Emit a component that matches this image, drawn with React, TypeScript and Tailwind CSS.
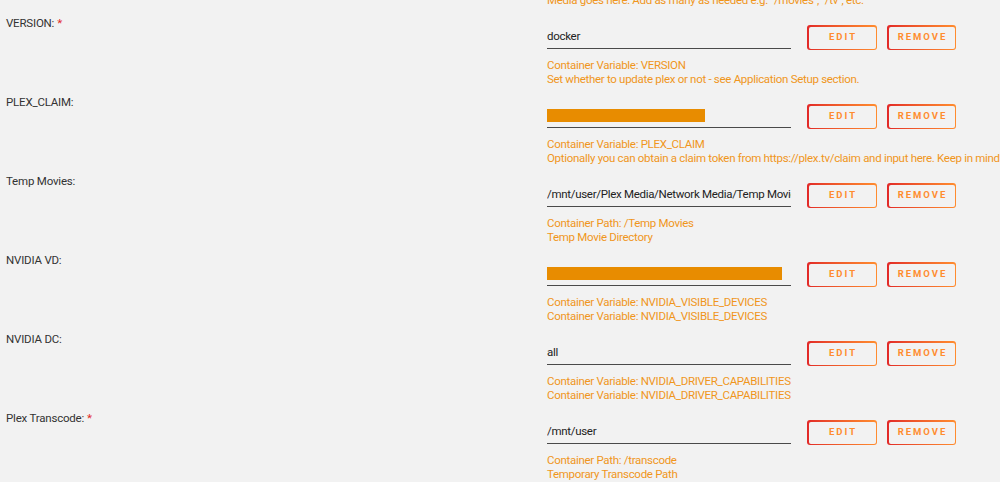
import React from 'react'

type Row = {
  label: string
  required?: boolean
  value?: string
  redact?: number
  lines: string[]
}

const rows: Row[] = [
  {
    label: 'VERSION:',
    required: true,
    value: 'docker',
    lines: [
      'Container Variable: VERSION',
      'Set whether to update plex or not - see Application Setup section.',
    ],
  },
  {
    label: 'PLEX_CLAIM:',
    redact: 158,
    lines: [
      'Container Variable: PLEX_CLAIM',
      'Optionally you can obtain a claim token from https://plex.tv/claim and input here. Keep in mind that the claim tokens expire within 4 minutes.',
    ],
  },
  {
    label: 'Temp Movies:',
    value: '/mnt/user/Plex Media/Network Media/Temp Movies/',
    lines: ['Container Path: /Temp Movies', 'Temp Movie Directory'],
  },
  {
    label: 'NVIDIA VD:',
    redact: 235,
    lines: [
      'Container Variable: NVIDIA_VISIBLE_DEVICES',
      'Container Variable: NVIDIA_VISIBLE_DEVICES',
    ],
  },
  {
    label: 'NVIDIA DC:',
    value: 'all',
    lines: [
      'Container Variable: NVIDIA_DRIVER_CAPABILITIES',
      'Container Variable: NVIDIA_DRIVER_CAPABILITIES',
    ],
  },
  {
    label: 'Plex Transcode:',
    required: true,
    value: '/mnt/user',
    lines: ['Container Path: /transcode', 'Temporary Transcode Path'],
  },
]

function GradButton({ text, width }: { text: string; width: string }) {
  return (
    <div
      className={`${width} h-[25px] rounded-[3px] p-[1.5px] bg-gradient-to-r from-[#e22828] to-[#ff8c2f]`}
    >
      <div className="w-full h-full rounded-[2px] bg-[#f2f2f2] flex items-center justify-center text-[9.5px] font-bold tracking-[2px] text-[#ff8c2f] pl-[2px]">
        {text}
      </div>
    </div>
  )
}

function SettingRow({ row }: { row: Row }) {
  return (
    <div className="flex h-[79px]">
      <div className="w-[547px] shrink-0 pl-[6px] pt-[5px] text-[11.5px] leading-[16px] tracking-[-0.2px] text-[#333]">
        {row.label}
        {row.required && <span className="text-[#e22828] ml-[3px]">*</span>}
      </div>
      <div className="flex-1 min-w-0">
        <div className="flex items-start pt-[15px]">
          <div className="w-[244px] h-[24px] border-b-[1.5px] border-[#4a4a4a] flex items-center overflow-hidden">
            {row.redact ? (
              <div className="h-[13px] bg-[#e88c00]" style={{ width: row.redact }} />
            ) : (
              <span className="whitespace-nowrap text-[11.5px] tracking-[-0.3px] text-[#222]">{row.value}</span>
            )}
          </div>
          <div className="ml-[16px] flex gap-[10px]">
            <GradButton text="EDIT" width="w-[70px]" />
            <GradButton text="REMOVE" width="w-[69px]" />
          </div>
        </div>
        <div className="pt-[8px] text-[11.5px] leading-[14px] tracking-[-0.3px] text-[#f0961c] whitespace-nowrap">
          {row.lines.map((l, i) => (
            <div key={i}>{l}</div>
          ))}
        </div>
      </div>
    </div>
  )
}

export default function App() {
  return (
    <div
      className="w-[1000px] h-[482px] overflow-hidden bg-[#f2f2f2]"
      style={{ fontFamily: 'Roboto, "Noto Sans", sans-serif' }}
    >
      <div className="pl-[547px] -mt-[7px] h-[17px] text-[11.5px] leading-[14px] tracking-[-0.3px] text-[#f0961c] whitespace-nowrap">
        Media goes here: Add as many as needed e.g. "/movies", "/tv", etc.
      </div>
      {rows.map((r) => (
        <SettingRow key={r.label} row={r} />
      ))}
    </div>
  )
}
